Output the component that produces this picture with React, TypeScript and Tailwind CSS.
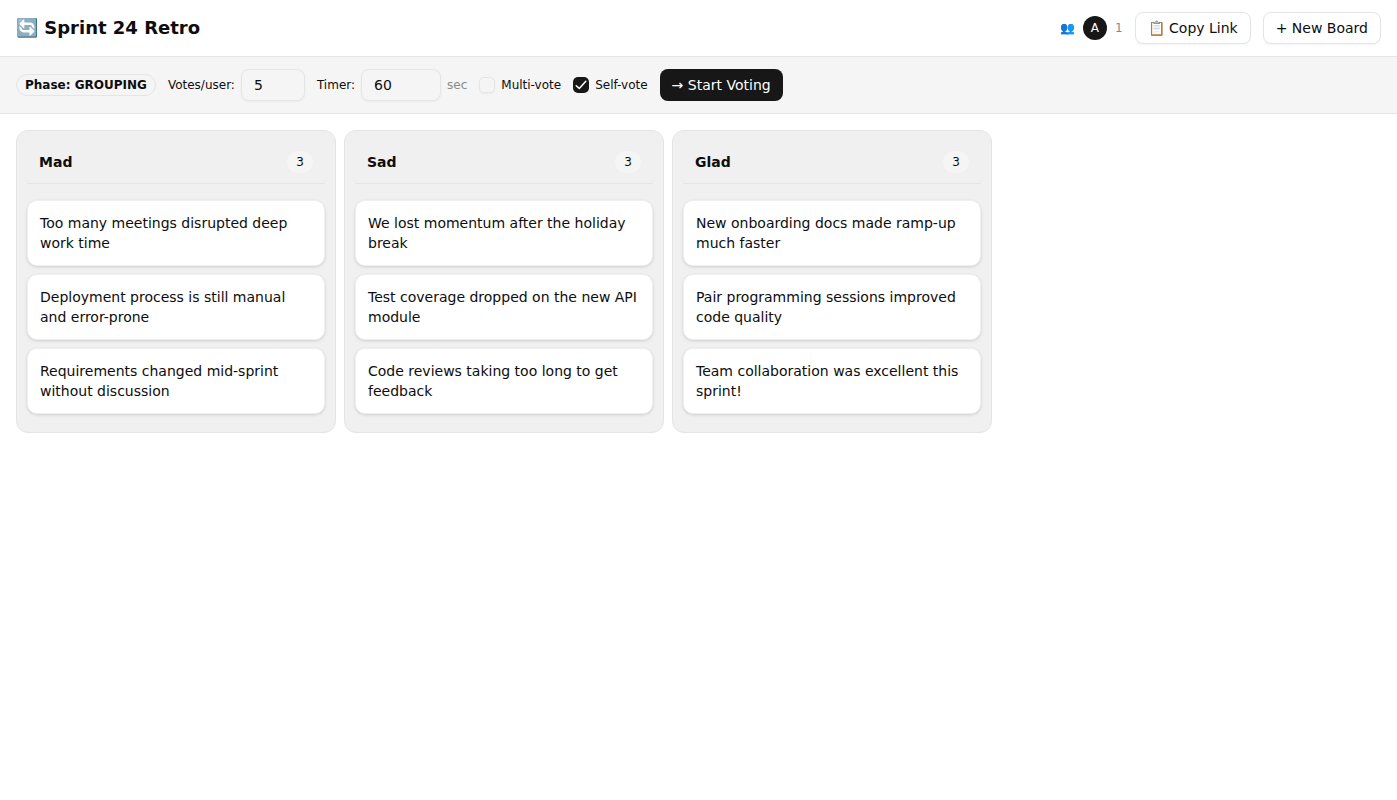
const columns = [
  {
    title: 'Mad',
    cards: [
      'Too many meetings disrupted deep work time',
      'Deployment process is still manual and error-prone',
      'Requirements changed mid-sprint without discussion',
    ],
  },
  {
    title: 'Sad',
    cards: [
      'We lost momentum after the holiday break',
      'Test coverage dropped on the new API module',
      'Code reviews taking too long to get feedback',
    ],
  },
  {
    title: 'Glad',
    cards: [
      'New onboarding docs made ramp-up much faster',
      'Pair programming sessions improved code quality',
      'Team collaboration was excellent this sprint!',
    ],
  },
];

export default function App() {
  return (
    <div className="min-h-screen bg-white text-[#0d0d0d] font-['DejaVu_Sans',sans-serif]">
      <header className="h-[57px] flex items-center justify-between px-4 border-b border-[#e5e5e5]">
        <h1 className="text-[18px] font-bold mb-[2px]">🔄 Sprint 24 Retro</h1>
        <div className="flex items-center gap-3">
          <div className="flex items-center gap-2">
            <span className="text-[12px]">👥</span>
            <span className="w-6 h-6 rounded-full bg-[#171717] text-white text-[12px] font-medium flex items-center justify-center">A</span>
            <span className="text-[12px] text-[#8a8a8a]">1</span>
          </div>
          <button className="h-8 px-3 rounded-lg border border-[#e5e5e5] bg-white text-[14px] shadow-[0_1px_2px_rgba(0,0,0,0.05)]">📋 Copy Link</button>
          <button className="h-8 px-3 rounded-lg border border-[#e5e5e5] bg-white text-[14px] shadow-[0_1px_2px_rgba(0,0,0,0.05)]">+ New Board</button>
        </div>
      </header>

      <div className="h-[57px] flex items-center gap-3 px-4 bg-[#f5f5f5] border-b border-[#e5e5e5]">
        <span className="px-2 py-px rounded-full border border-[#e5e5e5] text-[12px] font-bold">Phase: GROUPING</span>
        <label className="flex items-center gap-[6px] text-[12px]">
          Votes/user:
          <span className="w-16 h-8 flex items-center px-3 rounded-lg border border-[#e5e5e5] text-[14px] shadow-[0_1px_2px_rgba(0,0,0,0.05)]">5</span>
        </label>
        <label className="flex items-center gap-[6px] text-[12px]">
          Timer:
          <span className="w-20 h-8 flex items-center px-3 rounded-lg border border-[#e5e5e5] text-[14px] shadow-[0_1px_2px_rgba(0,0,0,0.05)]">60</span>
        </label>
        <span className="-ml-[6px] text-[12px] text-[#8a8a8a]">sec</span>
        <label className="flex items-center gap-[6px] text-[12px]">
          <span className="w-4 h-4 rounded-[5px] border border-[#e5e5e5] shadow-[0_1px_2px_rgba(0,0,0,0.05)]" />
          Multi-vote
        </label>
        <label className="flex items-center gap-[6px] text-[12px]">
          <span className="w-4 h-4 rounded-[5px] bg-[#171717] flex items-center justify-center">
            <svg width="16" height="16" viewBox="0 0 16 16" fill="none" stroke="white" strokeWidth="1.5" strokeLinecap="round" strokeLinejoin="round">
              <path d="M3.2 8.7 6.3 11.4 12.8 4.2" />
            </svg>
          </span>
          Self-vote
        </label>
        <button className="h-8 px-3 rounded-lg bg-[#171717] text-white text-[14px]">→ Start Voting</button>
      </div>

      <main className="flex items-start gap-2 p-4">
        {columns.map((col) => (
          <section key={col.title} className="w-80 rounded-xl border border-[#e5e5e5] bg-[#f0f0f0] px-[10px] pt-[10px] pb-[18px]">
            <div className="h-[43px] flex items-center justify-between px-3 border-b border-[#e5e5e5]">
              <h2 className="text-[14px] font-bold">{col.title}</h2>
              <span className="w-[26px] h-[22px] rounded-full bg-[#f5f5f5] text-[12px] flex items-center justify-center">3</span>
            </div>
            <div className="flex flex-col gap-2 mt-4">
              {col.cards.map((text) => (
                <div key={text} className="rounded-[10px] border border-[#f0f0f0] bg-white px-3 py-3 text-[14px] leading-5 shadow-[0_1px_3px_rgba(0,0,0,0.15)]">
                  {text}
                </div>
              ))}
            </div>
          </section>
        ))}
      </main>
    </div>
  );
}
